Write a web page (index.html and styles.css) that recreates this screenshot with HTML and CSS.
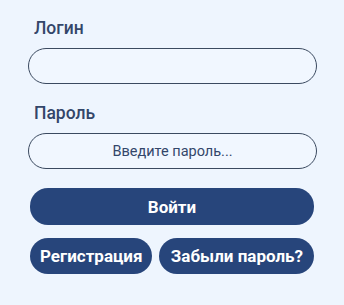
FILE: index.html
```html
<!DOCTYPE html>
<html lang="ru">
<head>
<meta charset="utf-8">
<link rel="stylesheet" href="styles.css">
</head>
<body>
<form class="form">
  <label class="label">Логин</label>
  <input class="field" type="text">
  <label class="label label-second">Пароль</label>
  <input class="field field-second" type="password" placeholder="Введите пароль...">
  <button class="btn btn-main" type="button">Войти</button>
  <div class="row">
    <button class="btn btn-small" type="button">Регистрация</button>
    <button class="btn btn-small btn-wide" type="button">Забыли пароль?</button>
  </div>
</form>
</body>
</html>
```
FILE: styles.css
```css
html, body {
  margin: 0;
  background: #eef5fe;
}
body {
  width: 344px;
  height: 305px;
  font-family: Roboto, "Noto Sans", sans-serif;
}
.form {
  display: flex;
  flex-direction: column;
  padding: 18px 27px 0 28px;
}
.label {
  display: block;
  font-size: 17.5px;
  line-height: 20px;
  font-weight: 500;
  color: #33466a;
  margin: 0 0 10px 6px;
}
.label-second {
  margin-top: 19px;
}
.field {
  box-sizing: border-box;
  width: 289px;
  height: 36px;
  margin: 0;
  border: 1px solid #3b4a60;
  border-radius: 18px;
  background: #f1f7ff;
  font-family: Roboto, sans-serif;
  font-size: 14.5px;
  text-align: center;
  color: #2e3f5c;
  outline: none;
}
.field::placeholder {
  color: #33466a;
}
.btn {
  box-sizing: border-box;
  height: 36px;
  border: none;
  border-radius: 18px;
  background: #27457b;
  color: #ffffff;
  font-family: Roboto, sans-serif;
  font-weight: 700;
  font-size: 17px;
  padding: 0 10px;
}
.btn-main {
  width: 284px;
  margin: 19px 0 0 2px;
  height: 37px;
}
.row {
  display: flex;
  justify-content: space-between;
  width: 284px;
  margin: 13px 0 0 2px;
}
.btn-small {
  height: 36px;
}
.btn-wide {
  padding: 0 11px 0 12px;
}
```
